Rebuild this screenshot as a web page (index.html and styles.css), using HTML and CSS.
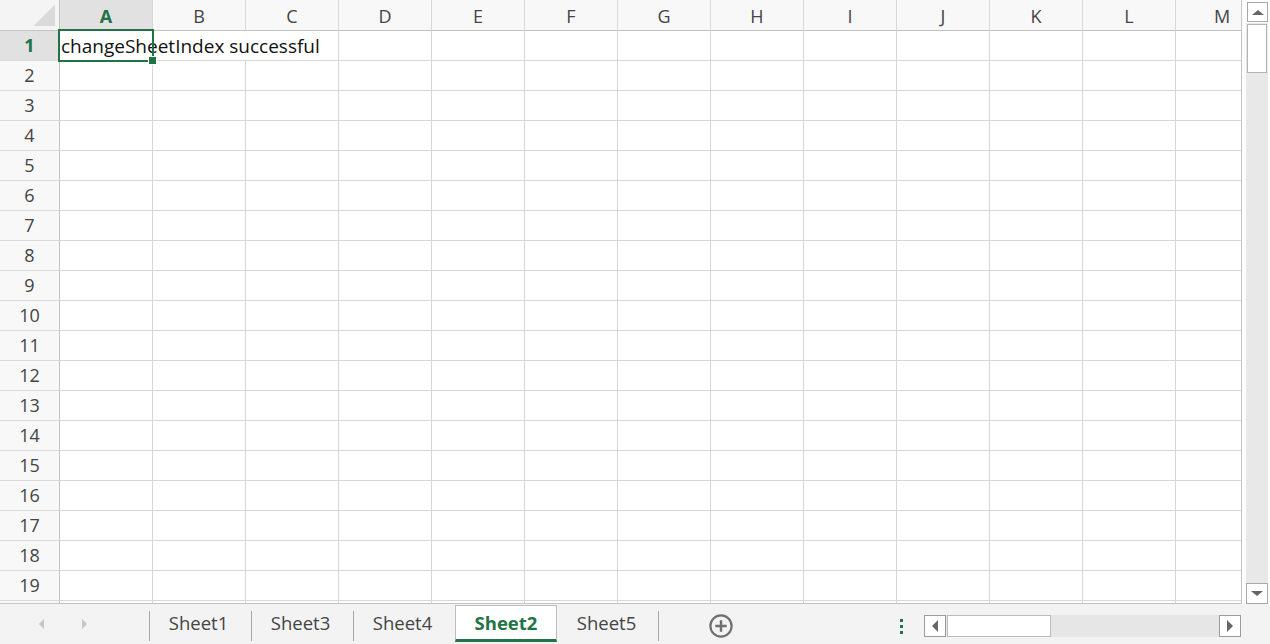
FILE: index.html
```html
<!DOCTYPE html>
<html lang="en">
<head>
<meta charset="utf-8">
<title>Sheet</title>
<link rel="stylesheet" href="styles.css">
</head>
<body>
<div class="app">
  <div class="main">
    <div class="sheet">
      <div class="row head">
        <div class="corner"></div>
        <div class="ch sel">A</div><div class="ch">B</div><div class="ch">C</div><div class="ch">D</div><div class="ch">E</div><div class="ch">F</div><div class="ch">G</div><div class="ch">H</div><div class="ch">I</div><div class="ch">J</div><div class="ch">K</div><div class="ch">L</div><div class="ch">M</div>
      </div>
      <div class="row"><div class="rh sel">1</div><div class="c nb"><span class="val">changeSheetIndex successful</span></div><div class="c nb"></div><div class="c"></div><div class="c"></div><div class="c"></div><div class="c"></div><div class="c"></div><div class="c"></div><div class="c"></div><div class="c"></div><div class="c"></div><div class="c"></div><div class="c"></div></div>
      <div class="row"><div class="rh">2</div><div class="c"></div><div class="c"></div><div class="c"></div><div class="c"></div><div class="c"></div><div class="c"></div><div class="c"></div><div class="c"></div><div class="c"></div><div class="c"></div><div class="c"></div><div class="c"></div><div class="c"></div></div>
      <div class="row"><div class="rh">3</div><div class="c"></div><div class="c"></div><div class="c"></div><div class="c"></div><div class="c"></div><div class="c"></div><div class="c"></div><div class="c"></div><div class="c"></div><div class="c"></div><div class="c"></div><div class="c"></div><div class="c"></div></div>
      <div class="row"><div class="rh">4</div><div class="c"></div><div class="c"></div><div class="c"></div><div class="c"></div><div class="c"></div><div class="c"></div><div class="c"></div><div class="c"></div><div class="c"></div><div class="c"></div><div class="c"></div><div class="c"></div><div class="c"></div></div>
      <div class="row"><div class="rh">5</div><div class="c"></div><div class="c"></div><div class="c"></div><div class="c"></div><div class="c"></div><div class="c"></div><div class="c"></div><div class="c"></div><div class="c"></div><div class="c"></div><div class="c"></div><div class="c"></div><div class="c"></div></div>
      <div class="row"><div class="rh">6</div><div class="c"></div><div class="c"></div><div class="c"></div><div class="c"></div><div class="c"></div><div class="c"></div><div class="c"></div><div class="c"></div><div class="c"></div><div class="c"></div><div class="c"></div><div class="c"></div><div class="c"></div></div>
      <div class="row"><div class="rh">7</div><div class="c"></div><div class="c"></div><div class="c"></div><div class="c"></div><div class="c"></div><div class="c"></div><div class="c"></div><div class="c"></div><div class="c"></div><div class="c"></div><div class="c"></div><div class="c"></div><div class="c"></div></div>
      <div class="row"><div class="rh">8</div><div class="c"></div><div class="c"></div><div class="c"></div><div class="c"></div><div class="c"></div><div class="c"></div><div class="c"></div><div class="c"></div><div class="c"></div><div class="c"></div><div class="c"></div><div class="c"></div><div class="c"></div></div>
      <div class="row"><div class="rh">9</div><div class="c"></div><div class="c"></div><div class="c"></div><div class="c"></div><div class="c"></div><div class="c"></div><div class="c"></div><div class="c"></div><div class="c"></div><div class="c"></div><div class="c"></div><div class="c"></div><div class="c"></div></div>
      <div class="row"><div class="rh">10</div><div class="c"></div><div class="c"></div><div class="c"></div><div class="c"></div><div class="c"></div><div class="c"></div><div class="c"></div><div class="c"></div><div class="c"></div><div class="c"></div><div class="c"></div><div class="c"></div><div class="c"></div></div>
      <div class="row"><div class="rh">11</div><div class="c"></div><div class="c"></div><div class="c"></div><div class="c"></div><div class="c"></div><div class="c"></div><div class="c"></div><div class="c"></div><div class="c"></div><div class="c"></div><div class="c"></div><div class="c"></div><div class="c"></div></div>
      <div class="row"><div class="rh">12</div><div class="c"></div><div class="c"></div><div class="c"></div><div class="c"></div><div class="c"></div><div class="c"></div><div class="c"></div><div class="c"></div><div class="c"></div><div class="c"></div><div class="c"></div><div class="c"></div><div class="c"></div></div>
      <div class="row"><div class="rh">13</div><div class="c"></div><div class="c"></div><div class="c"></div><div class="c"></div><div class="c"></div><div class="c"></div><div class="c"></div><div class="c"></div><div class="c"></div><div class="c"></div><div class="c"></div><div class="c"></div><div class="c"></div></div>
      <div class="row"><div class="rh">14</div><div class="c"></div><div class="c"></div><div class="c"></div><div class="c"></div><div class="c"></div><div class="c"></div><div class="c"></div><div class="c"></div><div class="c"></div><div class="c"></div><div class="c"></div><div class="c"></div><div class="c"></div></div>
      <div class="row"><div class="rh">15</div><div class="c"></div><div class="c"></div><div class="c"></div><div class="c"></div><div class="c"></div><div class="c"></div><div class="c"></div><div class="c"></div><div class="c"></div><div class="c"></div><div class="c"></div><div class="c"></div><div class="c"></div></div>
      <div class="row"><div class="rh">16</div><div class="c"></div><div class="c"></div><div class="c"></div><div class="c"></div><div class="c"></div><div class="c"></div><div class="c"></div><div class="c"></div><div class="c"></div><div class="c"></div><div class="c"></div><div class="c"></div><div class="c"></div></div>
      <div class="row"><div class="rh">17</div><div class="c"></div><div class="c"></div><div class="c"></div><div class="c"></div><div class="c"></div><div class="c"></div><div class="c"></div><div class="c"></div><div class="c"></div><div class="c"></div><div class="c"></div><div class="c"></div><div class="c"></div></div>
      <div class="row"><div class="rh">18</div><div class="c"></div><div class="c"></div><div class="c"></div><div class="c"></div><div class="c"></div><div class="c"></div><div class="c"></div><div class="c"></div><div class="c"></div><div class="c"></div><div class="c"></div><div class="c"></div><div class="c"></div></div>
      <div class="row"><div class="rh">19</div><div class="c"></div><div class="c"></div><div class="c"></div><div class="c"></div><div class="c"></div><div class="c"></div><div class="c"></div><div class="c"></div><div class="c"></div><div class="c"></div><div class="c"></div><div class="c"></div><div class="c"></div></div>
      <div class="row"><div class="rh"></div><div class="c"></div><div class="c"></div><div class="c"></div><div class="c"></div><div class="c"></div><div class="c"></div><div class="c"></div><div class="c"></div><div class="c"></div><div class="c"></div><div class="c"></div><div class="c"></div><div class="c"></div></div>
      <div class="selection"><div class="handle"></div></div>
    </div>
    <div class="vscroll">
      <div class="vbtn up"><span class="tri-up"></span></div>
      <div class="vtrack"><div class="vthumb"></div></div>
      <div class="vbtn down"><span class="tri-down"></span></div>
    </div>
  </div>
  <div class="tabbar">
    <div class="nav">
      <span class="nav-left"></span>
      <span class="nav-right"></span>
    </div>
    <div class="tabs">
      <div class="tab">Sheet1</div>
      <div class="tab">Sheet3</div>
      <div class="tab">Sheet4</div>
      <div class="tab active">Sheet2</div>
      <div class="tab after-active last">Sheet5</div>
    </div>
    <div class="add">
      <svg width="24" height="24" viewBox="0 0 24 24"><circle cx="12" cy="12" r="10.6" fill="none" stroke="#6f6f6f" stroke-width="2.2"/><path d="M12 6.3v11.4M6.3 12h11.4" stroke="#6f6f6f" stroke-width="2.4" fill="none"/></svg>
    </div>
    <div class="spacer"></div>
    <div class="dots"><span></span><span></span><span></span></div>
    <div class="hscroll">
      <div class="hbtn"><span class="tri-left"></span></div>
      <div class="htrack"><div class="hthumb"></div></div>
      <div class="hbtn"><span class="tri-right"></span></div>
    </div>
  </div>
</div>
</body>
</html>
```
FILE: styles.css
```css
* { box-sizing: border-box; margin: 0; padding: 0; }
html, body { width: 1270px; height: 644px; overflow: hidden; }
body { font-family: "Open Sans", "Noto Sans", sans-serif; background: #fff; color: #222; }

.app { display: flex; flex-direction: column; width: 1270px; height: 644px; }
.main { display: flex; height: 604px; }

.sheet {
  position: relative;
  width: 1242px;
  height: 604px;
  overflow: hidden;
  border-right: 1px solid #c4c4c4;
  border-bottom: 1px solid #c4c4c4;
  flex: none;
}
.row { display: flex; height: 30px; }
.row.head { height: 31px; }

.corner {
  flex: none;
  width: 60px;
  height: 31px;
  background: #f4f4f4 linear-gradient(to top left, #dadada 50%, transparent 50%) no-repeat right 4px bottom 4px / 22px 21px;
  border-right: 1px solid #c4c4c4;
  border-bottom: 1px solid #c4c4c4;
}
.ch {
  flex: none;
  width: 93px;
  height: 31px;
  background: #f8f8f8;
  border-right: 1px solid #d8d8d8;
  border-bottom: 1px solid #c2c2c2;
  font-size: 18px;
  line-height: 32px;
  text-align: center;
  color: #444;
}
.ch.sel, .rh.sel { background: #e1e1e1; color: #217346; font-weight: 700; }

.rh {
  flex: none;
  width: 60px;
  height: 30px;
  background: #f8f8f8;
  border-right: 1px solid #c2c2c2;
  border-bottom: 1px solid #d8d8d8;
  font-size: 18px;
  line-height: 29px;
  text-align: center;
  color: #444;
}
.c {
  flex: none;
  width: 93px;
  height: 30px;
  border-right: 1px solid #d6d6d6;
  border-bottom: 1px solid #d6d6d6;
  position: relative;
}
.c.nb { border-right-color: transparent; }
.val {
  display: block;
  white-space: nowrap;
  padding-left: 1px;
  font-size: 19px;
  line-height: 31px;
  color: #111;
  position: relative;
  z-index: 1;
}

.selection {
  position: absolute;
  left: 58px;
  top: 29px;
  width: 96px;
  height: 33px;
  border: 2px solid #217346;
  z-index: 2;
}
.handle {
  position: absolute;
  right: -5px;
  bottom: -5px;
  width: 9px;
  height: 9px;
  background: #217346;
  border: 1px solid #fff;
}

/* vertical scrollbar */
.vscroll {
  flex: none;
  width: 28px;
  height: 604px;
  padding: 2px 2px 0 4px;
  display: flex;
  flex-direction: column;
  background: #fdfdfd;
}
.vbtn {
  flex: none;
  display: flex;
  align-items: center;
  justify-content: center;
  background: #fff;
  border: 1px solid #a8a8a8;
}
.vbtn.up { height: 20px; margin: 0 0 0 1px; }
.vbtn.down { height: 21px; }
.vtrack { flex: 1; background: #e8e8e8; padding: 1px 0 0 1px; margin-top: 1px; }
.vthumb { width: 20px; height: 49px; background: #fff; border: 1px solid #b4b4b4; }
.tri-up { width: 0; height: 0; border-left: 6px solid transparent; border-right: 6px solid transparent; border-bottom: 5px solid #666; }
.tri-down { width: 0; height: 0; border-left: 6px solid transparent; border-right: 6px solid transparent; border-top: 5px solid #666; }

/* tab bar */
.tabbar {
  flex: none;
  height: 40px;
  display: flex;
  align-items: flex-start;
  background: #f3f3f3;
}
.nav {
  flex: none;
  width: 149px;
  height: 40px;
  display: flex;
  align-items: center;
  padding-left: 39px;
  gap: 38px;
}
.nav-left { width: 0; height: 0; border-top: 5px solid transparent; border-bottom: 5px solid transparent; border-right: 5px solid #c6c6c6; }
.nav-right { width: 0; height: 0; border-top: 5px solid transparent; border-bottom: 5px solid transparent; border-left: 5px solid #c6c6c6; }

.tabs { flex: none; display: flex; height: 40px; }
.tab {
  flex: none;
  width: 102px;
  height: 40px;
  padding-top: 4px;
  padding-right: 3px;
  font-size: 18.5px;
  line-height: 30px;
  text-align: center;
  color: #444;
  background: linear-gradient(#a6a6a6, #a6a6a6) no-repeat left 0 top 7px / 1px 30px;
}
.tab.last {
  background:
    linear-gradient(#a6a6a6, #a6a6a6) no-repeat right 0 top 7px / 1px 30px;
}
.tab.active {
  height: 37px;
  margin-top: 1px;
  padding-top: 2px;
  padding-right: 0;
  background: #fff;
  border: 1px solid #bcbcbc;
  border-bottom: 3px solid #217346;
  color: #217346;
  font-weight: 700;
}

.add {
  flex: none;
  margin-left: 50px;
  margin-top: 10px;
  width: 24px;
  height: 24px;
}
.add svg { display: block; }
.spacer { flex: 1; }
.dots {
  flex: none;
  margin-top: 15px;
  width: 3px;
  display: flex;
  flex-direction: column;
  gap: 3px;
}
.dots span { display: block; width: 3px; height: 3px; background: #217346; }

.hscroll {
  flex: none;
  margin-left: 21px;
  margin-right: 29px;
  margin-top: 11px;
  width: 317px;
  height: 22px;
  display: flex;
}
.hbtn {
  flex: none;
  width: 22px;
  height: 22px;
  background: #fff;
  border: 1px solid #9c9c9c;
  display: flex;
  align-items: center;
  justify-content: center;
}
.htrack { flex: 1; background: #e6e6e6; padding-left: 1px; }
.hthumb { width: 104px; height: 22px; background: #fff; border: 1px solid #bcbcbc; }
.tri-left { width: 0; height: 0; border-top: 6px solid transparent; border-bottom: 6px solid transparent; border-right: 6px solid #666; }
.tri-right { width: 0; height: 0; border-top: 6px solid transparent; border-bottom: 6px solid transparent; border-left: 6px solid #666; }
```
